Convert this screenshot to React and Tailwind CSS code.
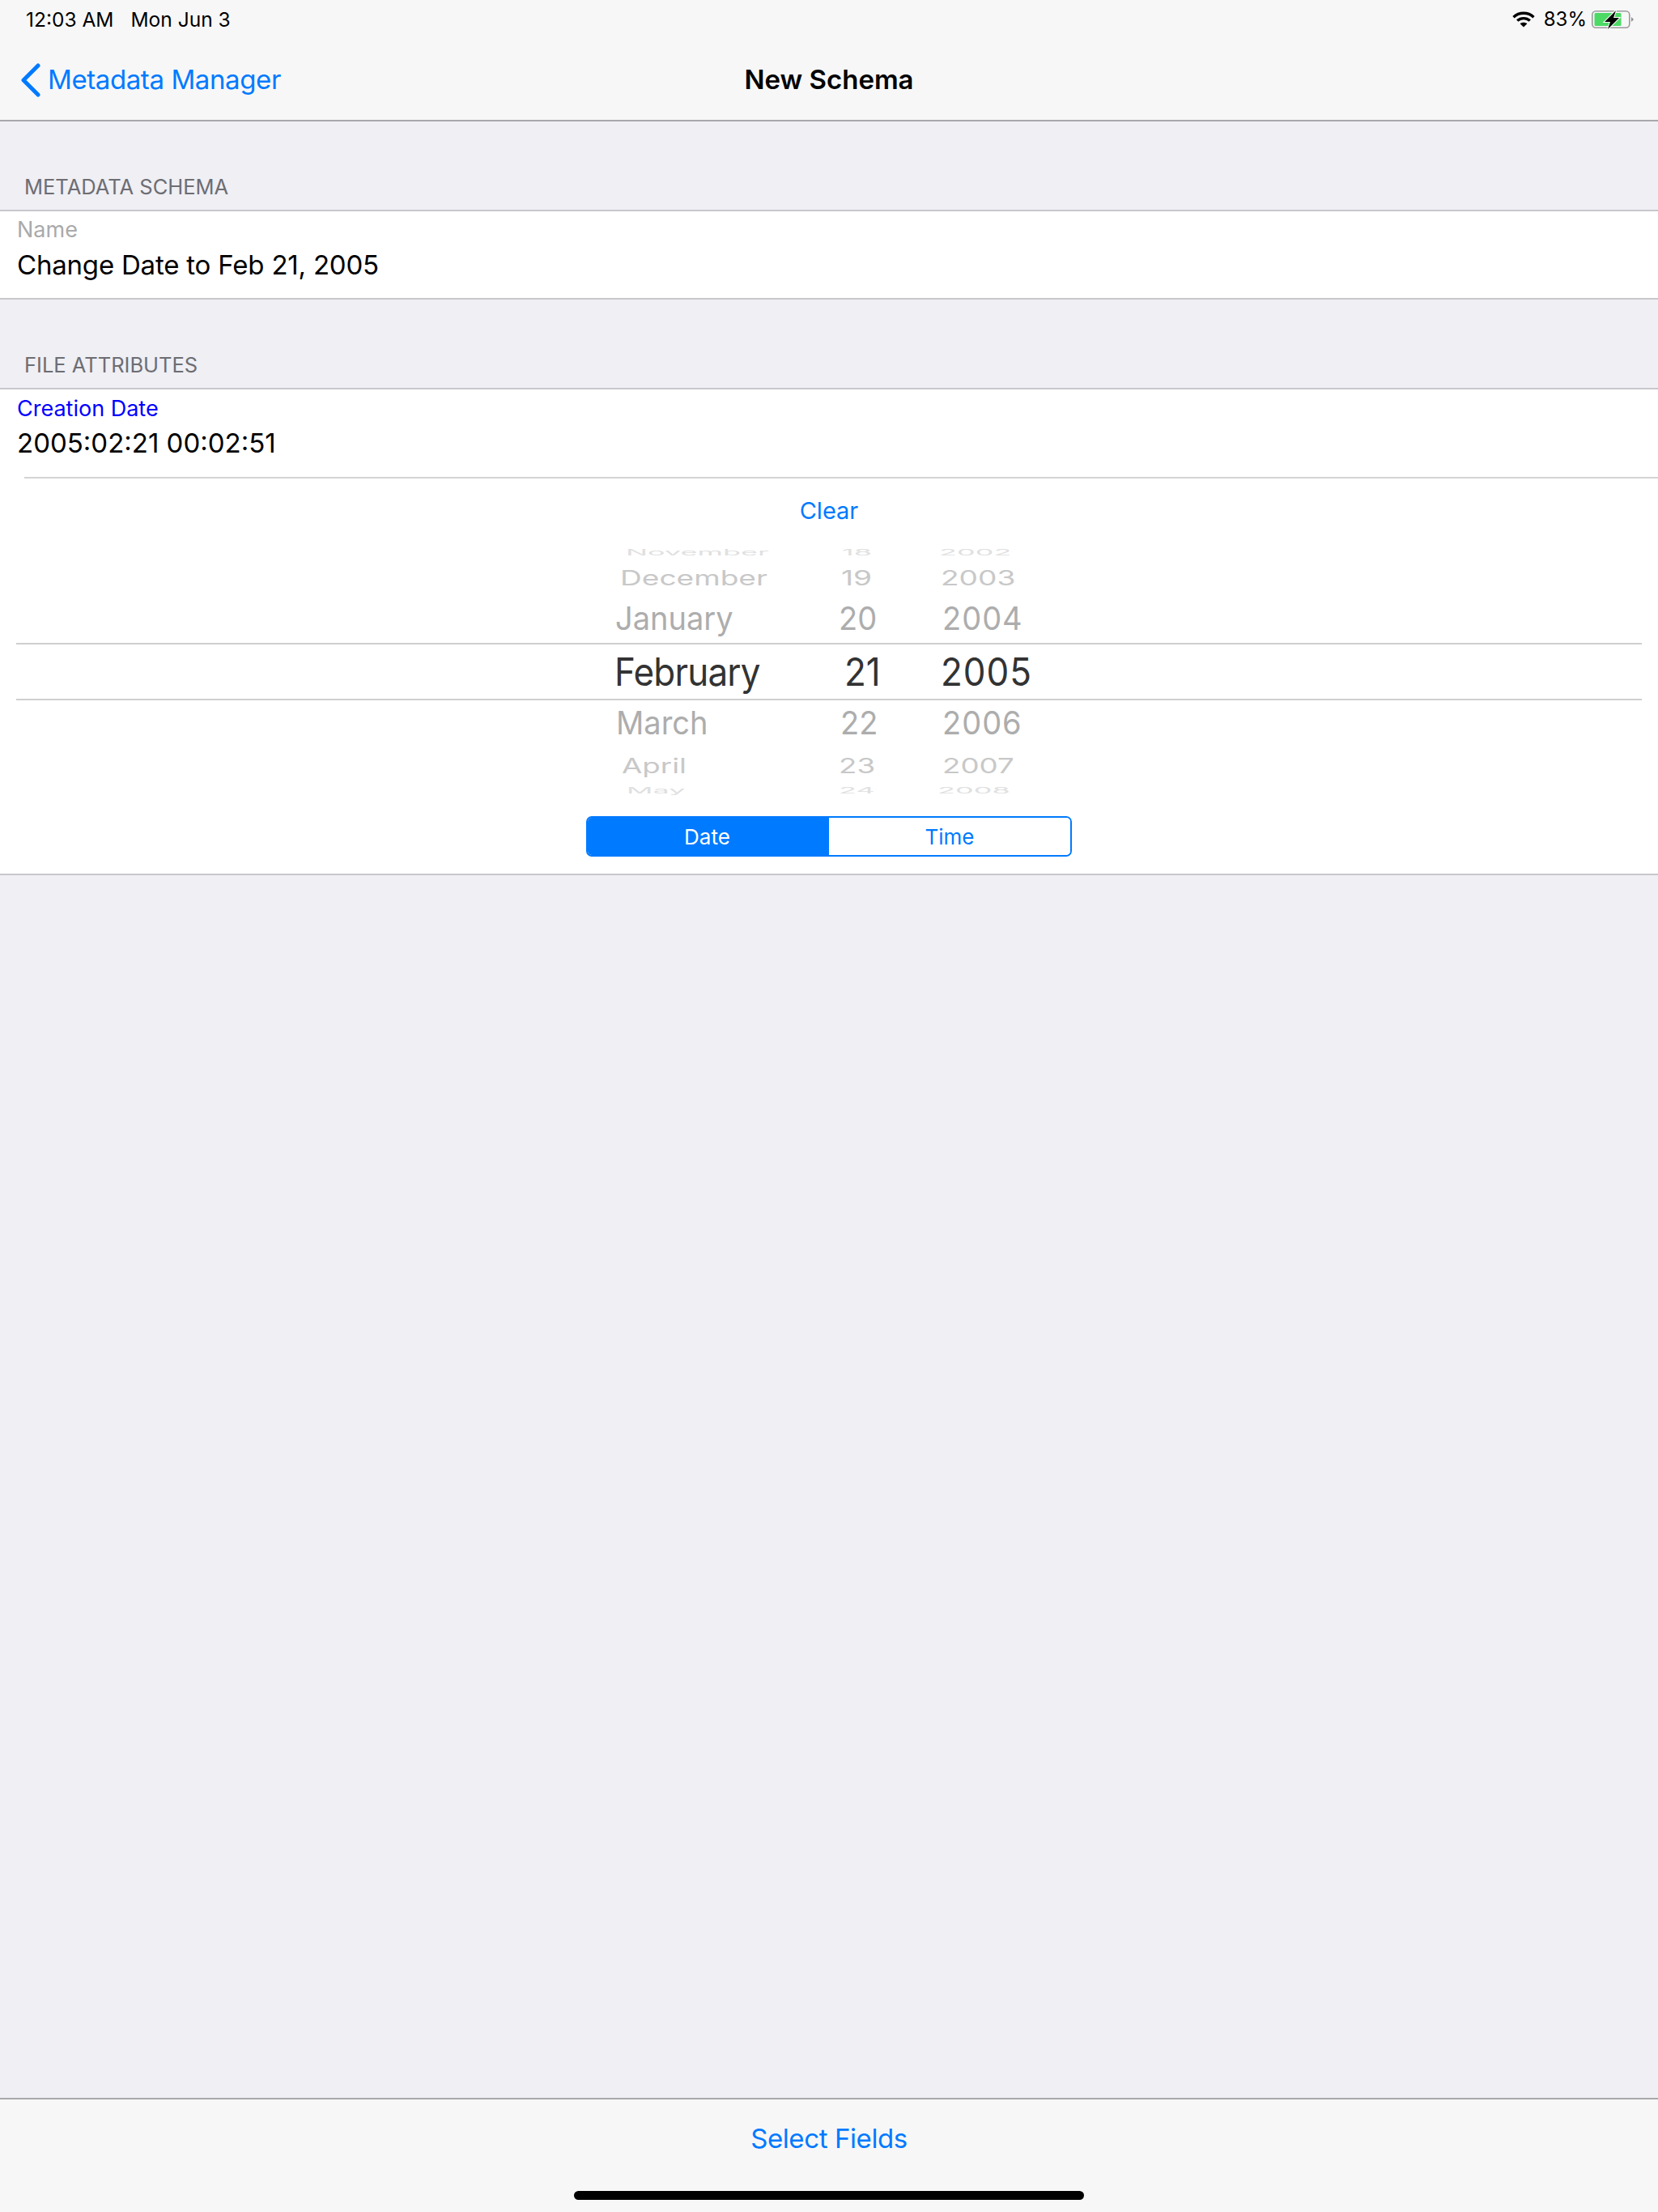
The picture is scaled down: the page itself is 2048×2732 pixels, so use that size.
import React from "react";

const pickerRows = [
  { month: "November", day: "18", year: "2002", row: "h-[32px] -mt-[18px] text-[#e0e0e0]", text: "text-[36px] origin-left scale-y-[0.3]", m: "ml-[14px]", d: "ml-[4px]", y: "ml-[2px]" },
  { month: "December", day: "19", year: "2003", row: "h-[32px] mb-[16px] text-[#c8c8c8]", text: "text-[36px] origin-left scale-x-[1.03] scale-y-[0.72]", m: "ml-[7px]", d: "ml-[3px]", y: "ml-[4px]" },
  { month: "January", day: "20", year: "2004", row: "h-[56px] text-[#adadad]", text: "text-[38px] scale-y-[1.05] origin-left", m: "ml-[1px]", d: "ml-0", y: "ml-[6px] tracking-[1px]" },
  { month: "February", day: "21", year: "2005", row: "h-[70px] pt-[6px] text-[#333333]", text: "text-[44px] scale-y-[1.08] origin-left", m: "ml-0 tracking-[-0.8px]", d: "ml-[7px]", y: "ml-[4px] tracking-[1px]" },
  { month: "March", day: "22", year: "2006", row: "h-[56px] mt-[3px] text-[#adadad]", text: "text-[38px] scale-y-[1.05] origin-left", m: "ml-[2px]", d: "ml-[2px]", y: "ml-[6px] tracking-[1px]" },
  { month: "April", day: "23", year: "2007", row: "h-[32px] -mt-[1px] text-[#c8c8c8]", text: "text-[36px] origin-left scale-x-[1.02] scale-y-[0.72]", m: "ml-[9px]", d: "ml-0", y: "ml-[6px]" },
  { month: "May", day: "24", year: "2008", row: "h-[32px] -mt-[2px] text-[#e0e0e0]", text: "text-[36px] origin-left scale-y-[0.3]", m: "ml-[15px]", d: "ml-0", y: "ml-0" },
];

const Wifi = () => (
  <svg width="28" height="20" viewBox="0 0 28 20" fill="none" stroke="#000" strokeWidth="3.4">
    <path d="M1.5 7.2C8.5 0.6 19.5 0.6 26.5 7.2" />
    <path d="M6.2 11.6C10.6 7.6 17.4 7.6 21.8 11.6" />
    <path d="M14 19.5L9.6 15.2C12 13.2 16 13.2 18.4 15.2Z" fill="#000" stroke="none" />
  </svg>
);

const Battery = () => (
  <svg width="52" height="26" viewBox="0 0 52 26" fill="none">
    <rect x="0.8" y="2.8" width="46" height="20.4" rx="4.5" stroke="#9b9b9b" strokeWidth="1.6" />
    <rect x="3.5" y="5" width="33" height="16" rx="1.5" fill="#4cd964" />
    <path d="M49 10L52 13L49 16Z" fill="#8e8e8e" />
    <path d="M30 2L16 16H23L20 25L34 11H27Z" fill="#000" stroke="#fff" strokeWidth="2" paintOrder="stroke" />
  </svg>
);

const SectionLabel = ({ children }) => (
  <div className="h-[111px] flex items-end pb-[12px] pl-[30px] text-[25.5px] leading-[32px] text-[#6d6d72] border-b-2 border-[#c8c7cc]">
    {children}
  </div>
);

const App = () => {
  return (
    <div className="w-full h-[2732px] flex flex-col bg-[#efeff4] font-['Inter','Liberation_Sans',sans-serif]">
      {/* top bar */}
      <div className="h-[150px] shrink-0 bg-[#f7f7f8] border-b-2 border-[#a9a9ac]">
        <div className="h-[48px] flex items-center justify-between pl-[32px] pr-[30px] text-[24.5px] text-black">
          <div className="flex gap-[21px]">
            <span>12:03 AM</span>
            <span>Mon Jun 3</span>
          </div>
          <div className="flex items-center">
            <Wifi />
            <span className="ml-[11px] mr-[6px] text-[24px]">83%</span>
            <Battery />
          </div>
        </div>
        <div className="h-[100px] pt-[2px] flex items-center relative">
          <div className="flex items-center pl-[26px] gap-[9px] text-[33px] tracking-[-0.4px] text-[#007aff]">
            <svg width="24" height="42" viewBox="0 0 24 42" fill="none" stroke="#007aff" strokeWidth="5" strokeLinecap="round" strokeLinejoin="round">
              <path d="M21 3L3 21L21 39" />
            </svg>
            <span>Metadata Manager</span>
          </div>
          <div className="absolute inset-x-0 text-center text-[33px] font-semibold text-black">New Schema</div>
        </div>
      </div>

      {/* form */}
      <div className="flex-1">
        <SectionLabel>METADATA SCHEMA</SectionLabel>
        <div className="h-[109px] bg-white border-b-2 border-[#c8c7cc] pl-[21px]">
          <div className="pt-[7px] text-[27px] leading-[32px] text-[#aaaaaa]">Name</div>
          <div className="mt-[6px] text-[33px] tracking-[-0.2px] leading-[42px] text-black">Change Date to Feb 21, 2005</div>
        </div>
        <SectionLabel>FILE ATTRIBUTES</SectionLabel>
        <div className="h-[108px] bg-white pl-[21px]">
          <div className="pt-[8px] text-[27px] leading-[32px] text-[#0000ff]">Creation Date</div>
          <div className="mt-[5px] text-[33px] leading-[42px] text-black">2005:02:21 00:02:51</div>
        </div>
        <div className="bg-white border-b-2 border-[#c8c7cc]">
          <div className="ml-[30px] border-t-2 border-[#d4d4d6]"></div>
          <div className="h-[82px] pb-[2px] flex items-center justify-center text-[29px] text-[#007aff]">Clear</div>

          {/* date wheel */}
          <div className="relative h-[312px] overflow-hidden">
            {pickerRows.map((r) => (
              <div key={r.month} className={`grid grid-cols-[277px_122px_1fr] items-center pl-[759px] ${r.row}`}>
                <div className={r.m}><div className={r.text}>{r.month}</div></div>
                <div className={r.d}><div className={r.text}>{r.day}</div></div>
                <div className={r.y}><div className={r.text}>{r.year}</div></div>
              </div>
            ))}
            <div className="absolute inset-x-[20px] top-[121px] h-[71px] border-y-2 border-[#cfcfd1]"></div>
          </div>

          <div className="h-[94px] pt-[23px] flex justify-center">
            <div className="w-[600px] h-[50px] flex rounded-[7px] border-2 border-[#007aff] overflow-hidden text-[26px]">
              <div className="w-1/2 pr-[3px] flex items-center justify-center bg-[#007aff] text-white">Date</div>
              <div className="w-1/2 flex items-center justify-center bg-white text-[#007aff]">Time</div>
            </div>
          </div>
        </div>
      </div>

      {/* bottom bar */}
      <div className="h-[141px] shrink-0 bg-[#f7f7f8] border-t-2 border-[#a9a9ac] flex flex-col items-center">
        <div className="h-[113px] pb-[16px] flex items-center text-[33px] tracking-[-0.4px] text-[#007aff]">Select Fields</div>
        <div className="w-[630px] h-[11px] rounded-full bg-black"></div>
      </div>
    </div>
  );
};

export default App;
